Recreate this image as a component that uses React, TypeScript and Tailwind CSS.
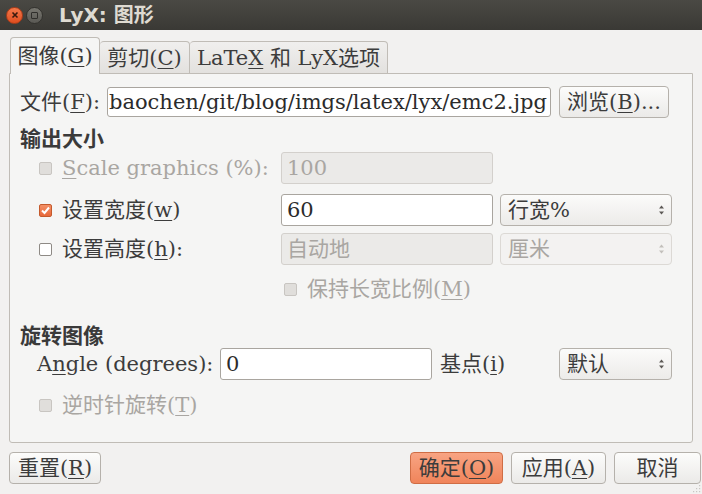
import React from "react";

function U({ children }: { children: React.ReactNode }) {
  return <span className="underline underline-offset-[3px] decoration-1">{children}</span>;
}

function Check({ state }: { state: "on" | "off" | "dis" }) {
  if (state === "on")
    return (
      <span className="inline-flex shrink-0 w-[13px] h-[13px] rounded-[2px] border border-[#c45a2c] bg-gradient-to-b from-[#f39066] to-[#e8683a] items-center justify-center">
        <svg width="11" height="11" viewBox="0 0 11 11">
          <path d="M2 5.5 L4.5 8 L9 2.5" stroke="#fff" strokeWidth="2" fill="none" />
        </svg>
      </span>
    );
  if (state === "off")
    return <span className="inline-block shrink-0 w-[13px] h-[13px] rounded-[2px] border border-[#8e8a85] bg-white" />;
  return <span className="inline-block shrink-0 w-[13px] h-[13px] rounded-[2px] border border-[#c8c5c1] bg-[#e0dedb]" />;
}

function Arrows({ dis }: { dis?: boolean }) {
  const c = dis ? "#c2bfbb" : "#5c5955";
  return (
    <svg width="7" height="12" viewBox="0 0 7 12">
      <path d="M1 4.5 L3.5 1.5 L6 4.5 Z" fill={c} />
      <path d="M1 7.5 L3.5 10.5 L6 7.5 Z" fill={c} />
    </svg>
  );
}

function Select({ label, dis, w }: { label: string; dis?: boolean; w: string }) {
  return (
    <div
      className={`${w} h-[32px] rounded-[4px] border flex items-center justify-between pl-[7px] pr-[6px] ${
        dis
          ? "border-[#dcd9d5] bg-[#f3f2f1] text-[#a9a6a2]"
          : "border-[#b5b1ab] bg-gradient-to-b from-[#fbfbfa] to-[#ecebe9] text-[#3c3c3c]"
      }`}
    >
      <span>{label}</span>
      <Arrows dis={dis} />
    </div>
  );
}

function Input({ value, dis, w }: { value: string; dis?: boolean; w: string }) {
  return (
    <div
      className={`${w} h-[32px] rounded-[3px] border flex items-center px-[5px] ${
        dis ? "border-[#d3d0cc] bg-[#ebeae8] text-[#a9a6a2]" : "border-[#a9a59f] bg-white text-[#2b2b2b]"
      }`}
    >
      {value}
    </div>
  );
}

function Btn({ children, w, primary }: { children: React.ReactNode; w: string; primary?: boolean }) {
  return (
    <div
      className={`${w} h-[32px] rounded-[4px] border flex items-center justify-center text-[#3c3c3c] whitespace-nowrap ${
        primary
          ? "border-[#cf6d45] bg-gradient-to-b from-[#f8a483] to-[#f0845a]"
          : "border-[#b5b1ab] bg-gradient-to-b from-[#fcfcfb] to-[#ebeae8]"
      }`}
    >
      {children}
    </div>
  );
}

export default function App() {
  return (
    <div className="w-[702px] h-[494px] bg-[#f2f1f0] text-[21px] leading-[26px] text-[#3c3c3c] flex flex-col overflow-hidden relative font-['DejaVu_Serif','Noto_Sans_CJK_SC',serif]">
      {/* title bar */}
      <div className="h-[30px] bg-gradient-to-b from-[#4a4944] to-[#3a3935] flex items-center shrink-0">
        <div className="ml-[6px] w-[17px] h-[17px] rounded-full bg-gradient-to-b from-[#f3784a] to-[#df4d1e] border border-[#b03c17] flex items-center justify-center">
          <svg width="8" height="8" viewBox="0 0 8 8">
            <path d="M1.5 1.5 L6.5 6.5 M6.5 1.5 L1.5 6.5" stroke="#3a1a0e" strokeWidth="1.6" />
          </svg>
        </div>
        <div className="ml-[3px] w-[17px] h-[17px] rounded-full bg-gradient-to-b from-[#77766f] to-[#5a5954] border border-[#33322e] flex items-center justify-center">
          <span className="w-[7px] h-[7px] border-[1.5px] border-[#2f2e2b] rounded-[1px]" />
        </div>
        <span className="ml-[16px] font-bold text-[20px] text-[#dfdbd2] font-['DejaVu_Sans','Noto_Sans_CJK_SC',sans-serif]">
          LyX: 图形
        </span>
      </div>

      {/* tabs */}
      <div className="flex items-end ml-[10px] mt-[7px] h-[37px] relative z-10 shrink-0 whitespace-nowrap">
        <div className="w-[90px] h-[37px] bg-[#f5f5f4] border border-b-0 border-[#c0bcb6] rounded-t-[4px] flex items-center justify-center text-[#3a3a3a]">
          图像(<U>G</U>)
        </div>
        <div className="w-[90px] h-[33px] bg-gradient-to-b from-[#f0efee] to-[#e3e1de] border border-l-0 border-[#c0bcb6] rounded-t-[4px] flex items-center justify-center">
          剪切(<U>C</U>)
        </div>
        <div className="w-[198px] h-[33px] bg-gradient-to-b from-[#f0efee] to-[#e3e1de] border border-l-0 border-[#c0bcb6] rounded-t-[4px] flex items-center justify-center">
          LaTe<U>X</U>&nbsp;和 LyX选项
        </div>
      </div>

      {/* panel */}
      <div className="mx-[9px] -mt-px h-[370px] bg-[#f5f5f4] border border-[#c0bcb6] rounded-b-[3px] flex flex-col shrink-0 whitespace-nowrap">
        <div className="flex items-center mt-[13px] ml-[10px] h-[30px]">
          <span className="w-[87px]">文件(<U>F</U>):</span>
          <div className="w-[444px] h-[30px] rounded-[3px] border border-[#a9a59f] bg-white flex items-center pl-[1px] text-[#2b2b2b] overflow-hidden">
            baochen/git/blog/imgs/latex/lyx/emc2.jpg
          </div>
          <div className="ml-[8px]">
            <Btn w="w-[110px]">
              浏览(<U>B</U>)...
            </Btn>
          </div>
        </div>

        <div className="ml-[10px] mt-[10px] h-[24px] flex items-center font-bold text-[#3a3a3a]">输出大小</div>

        <div className="flex items-center mt-[1px] h-[32px]">
          <div className="w-[271px] pl-[29px] flex items-center gap-[10px] text-[#a9a6a2]">
            <Check state="dis" />
            <span>
              <U>S</U>cale graphics (%):
            </span>
          </div>
          <Input value="100" dis w="w-[212px]" />
        </div>

        <div className="flex items-center mt-[10px] h-[32px]">
          <div className="w-[271px] pl-[29px] flex items-center gap-[10px]">
            <Check state="on" />
            <span>
              设置宽度(<U>w</U>)
            </span>
          </div>
          <Input value="60" w="w-[212px]" />
          <div className="ml-[7px]">
            <Select label="行宽%" w="w-[172px]" />
          </div>
        </div>

        <div className="flex items-center mt-[7px] h-[32px]">
          <div className="w-[271px] pl-[29px] flex items-center gap-[10px]">
            <Check state="off" />
            <span>
              设置高度(<U>h</U>):
            </span>
          </div>
          <Input value="自动地" dis w="w-[212px]" />
          <div className="ml-[7px]">
            <Select label="厘米" dis w="w-[172px]" />
          </div>
        </div>

        <div className="flex items-center mt-[9px] h-[30px] pl-[274px] gap-[10px] text-[#a9a6a2]">
          <Check state="dis" />
          <span>
            保持长宽比例(<U>M</U>)
          </span>
        </div>

        <div className="ml-[10px] mt-[20px] h-[24px] flex items-center font-bold text-[#3a3a3a]">旋转图像</div>

        <div className="flex items-center mt-0 h-[32px]">
          <span className="ml-[27px] w-[183px]">
            A<U>n</U>gle (degrees):
          </span>
          <Input value="0" w="w-[212px]" />
          <span className="ml-[8px] w-[119px]">
            基点(<U>i</U>)
          </span>
          <Select label="默认" w="w-[113px]" />
        </div>

        <div className="flex items-center mt-[10px] h-[30px] pl-[29px] gap-[10px] text-[#a9a6a2]">
          <Check state="dis" />
          <span>
            逆时针旋转(<U>T</U>)
          </span>
        </div>
      </div>

      {/* bottom buttons */}
      <div className="flex items-center mt-[9px] px-[9px] h-[32px] shrink-0">
        <Btn w="w-[92px]">
          重置(<U>R</U>)
        </Btn>
        <div className="flex-1" />
        <Btn w="w-[93px]" primary>
          确定(<U>O</U>)
        </Btn>
        <div className="ml-[8px]">
          <Btn w="w-[95px]">
            应用(<U>A</U>)
          </Btn>
        </div>
        <div className="ml-[8px] -mr-[8px]">
          <Btn w="w-[87px]">取消</Btn>
        </div>
      </div>

      <svg className="absolute right-[1px] bottom-[1px]" width="10" height="10" viewBox="0 0 10 10">
        {[
          [8, 2],
          [8, 5],
          [5, 5],
          [8, 8],
          [5, 8],
          [2, 8],
        ].map(([x, y], i) => (
          <rect key={i} x={x} y={y} width="1.2" height="1.2" fill="#c9c6c2" />
        ))}
      </svg>
    </div>
  );
}
